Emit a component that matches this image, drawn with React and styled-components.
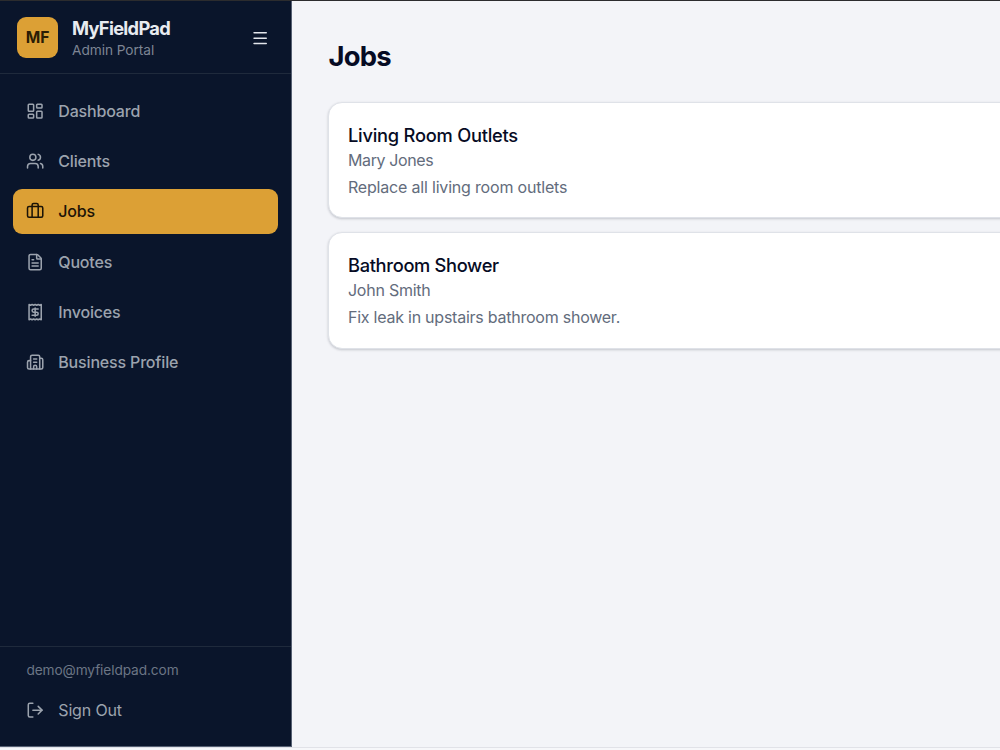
import React from "react";
import styled, { createGlobalStyle } from "styled-components";
import {
  LayoutDashboard,
  Users,
  Briefcase,
  FileText,
  Receipt,
  Building2,
  LogOut,
  Menu,
} from "lucide-react";

const Global = createGlobalStyle`
  * { box-sizing: border-box; margin: 0; padding: 0; }
  body {
    font-family: Inter, "Liberation Sans", sans-serif;
    background: #f3f4f8;
    overflow: hidden;
    -webkit-font-smoothing: antialiased;
  }
  button { font: inherit; border: 0; }
`;

const Shell = styled.div`
  width: 1000px;
  height: 750px;
  display: flex;
  flex-direction: column;
  border-top: 1px solid #2c2c2e;
  overflow: hidden;
`;

const Body = styled.div`
  height: 746px;
  flex: none;
  display: flex;
`;

const BottomEdge = styled.div`
  flex: 1;
  background: #f6f7fa;
  border-top: 1px solid #e1e2e8;
`;

const Sidebar = styled.aside`
  width: 292px;
  flex: none;
  display: flex;
  flex-direction: column;
  background: #0a152b;
  border-right: 1px solid #566073;
  border-bottom: 1px solid #566073;
`;

const Header = styled.header`
  height: 73px;
  flex: none;
  display: flex;
  align-items: center;
  padding: 0 22px 0 17px;
  border-bottom: 1px solid #1f2a3c;
`;

const Logo = styled.div`
  width: 41px;
  height: 41px;
  border-radius: 9px;
  background: #dca035;
  color: #2b1d05;
  display: flex;
  align-items: center;
  justify-content: center;
  padding-top: 1px;
`;

const Brand = styled.div`
  flex: 1;
  display: flex;
  flex-direction: column;
  padding: 4px 0 0 14px;
`;

const Text = styled.span`
  display: block;
  white-space: nowrap;
  font-size: ${(p) => p.$size}px;
  line-height: ${(p) => p.$line}px;
  font-weight: ${(p) => p.$weight || 400};
  letter-spacing: ${(p) => p.$track || 0}px;
  color: ${(p) => p.$color || "inherit"};
`;

const MenuButton = styled.button`
  background: none;
  color: #e3e6ec;
  display: flex;
  padding-top: 1.4px;
`;

const Nav = styled.nav`
  flex: 1;
  display: flex;
  flex-direction: column;
  gap: 4.6px;
  padding: 14px 13.3px 14px 12.6px;
`;

const NavItem = styled.a`
  height: 45.7px;
  display: flex;
  align-items: center;
  gap: 13.6px;
  padding-left: 13.8px;
  border-radius: 9px;
  background: ${(p) => (p.$active ? "#dca035" : "transparent")};
  color: ${(p) => (p.$active ? "#1c1407" : "#9ca3ae")};

  svg { flex: none; }
`;

const Footer = styled.footer`
  height: 100px;
  flex: none;
  border-top: 1px solid #1f2a3c;
  padding: 13px 13px 0 12.6px;
`;

const Email = styled.div`
  padding-left: 13.8px;
  margin-bottom: 7px;
`;

const Main = styled.main`
  flex: 1;
  min-width: 0;
  padding: 36px 0 0 36.4px;
  background: #f3f4f8;
`;

const Cards = styled.div`
  width: 720px;
  display: flex;
  flex-direction: column;
  gap: 14px;
  margin-top: 27px;
`;

const Card = styled.article`
  height: 116.4px;
  padding: 19px 18.6px;
  background: #fff;
  border: 1px solid #dfe2e8;
  border-radius: 14px;
  box-shadow: 0 1px 3px rgba(15, 23, 42, 0.13), 0 1px 2px rgba(15, 23, 42, 0.08);
`;

const ICON = 18.3;

const links = [
  { label: "Dashboard", Icon: LayoutDashboard },
  { label: "Clients", Icon: Users },
  { label: "Jobs", Icon: Briefcase, active: true },
  { label: "Quotes", Icon: FileText },
  { label: "Invoices", Icon: Receipt },
  { label: "Business Profile", Icon: Building2 },
];

const jobs = [
  { title: "Living Room Outlets", titleTrack: -0.24, client: "Mary Jones", clientTrack: -0.38, note: "Replace all living room outlets", noteTrack: -0.19 },
  { title: "Bathroom Shower", titleTrack: -0.33, client: "John Smith", clientTrack: -0.25, note: "Fix leak in upstairs bathroom shower.", noteTrack: -0.24 },
];

export default function App() {
  return (
    <>
      <Global />
      <Shell>
        <Body>
          <Sidebar>
            <Header>
              <Logo>
                <Text $size={15.6} $line={20} $weight={700}>MF</Text>
              </Logo>
              <Brand>
                <Text $size={18.3} $line={23} $weight={700} $track={-0.7} $color="#e8ebf0">MyFieldPad</Text>
                <Text $size={13.7} $line={21} $track={-0.06} $color="#7d8594">Admin Portal</Text>
              </Brand>
              <MenuButton aria-label="Menu">
                <Menu size={ICON} />
              </MenuButton>
            </Header>
            <Nav>
              {links.map(({ label, Icon, active }) => (
                <NavItem key={label} $active={active}>
                  <Icon size={ICON} />
                  <Text $size={16} $line={22} $weight={500} $track={-0.17}>{label}</Text>
                </NavItem>
              ))}
            </Nav>
            <Footer>
              <Email>
                <Text $size={13.7} $line={20} $track={-0.1} $color="#6c7585">demo@myfieldpad.com</Text>
              </Email>
              <NavItem as="button">
                <LogOut size={ICON} />
                <Text $size={16} $line={22} $track={-0.15}>Sign Out</Text>
              </NavItem>
            </Footer>
          </Sidebar>
          <Main>
            <Text as="h1" $size={27.4} $line={38} $weight={700} $track={-0.75} $color="#060b24">Jobs</Text>
            <Cards>
              {jobs.map((job) => (
                <Card key={job.title}>
                  <Text as="h2" $size={18.3} $line={27} $weight={500} $track={job.titleTrack} $color="#060b24">{job.title}</Text>
                  <Text $size={16} $line={23} $track={job.clientTrack} $color="#636c7c">{job.client}</Text>
                  <Text $size={16} $line={31.4} $track={job.noteTrack} $color="#636c7c">{job.note}</Text>
                </Card>
              ))}
            </Cards>
          </Main>
        </Body>
        <BottomEdge />
      </Shell>
    </>
  );
}
